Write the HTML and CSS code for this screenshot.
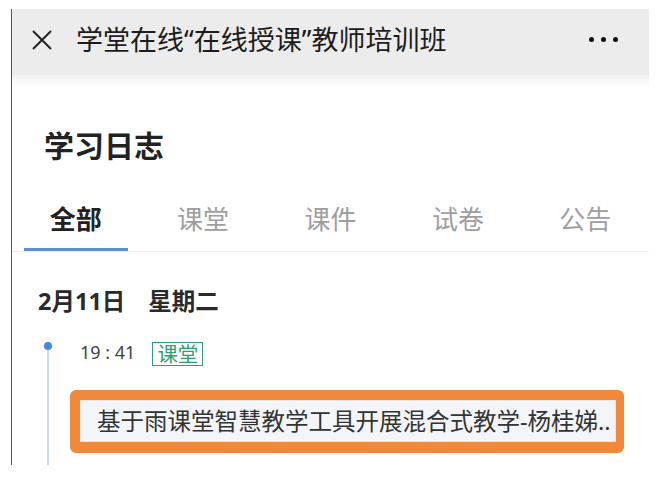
FILE: index.html
```html
<!DOCTYPE html>
<html lang="zh-CN">
<head>
  <meta charset="UTF-8">
  <meta name="viewport" content="width=device-width, initial-scale=1.0">
  <title>学习日志</title>
  <link rel="stylesheet" href="styles.css">
</head>
<body>
  <div class="frame">
    <header class="topbar">
      <svg class="close-icon" width="20" height="20" viewBox="0 0 20 20">
        <path d="M1 1 L19 19 M19 1 L1 19" stroke="#222" stroke-width="2" fill="none"/>
      </svg>
      <h1 class="page-title">学堂在线“在线授课”教师培训班</h1>
      <div class="more">
        <span></span><span></span><span></span>
      </div>
    </header>

    <main class="content">
      <h2 class="log-title">学习日志</h2>

      <nav class="tabs">
        <div class="tab active">全部</div>
        <div class="tab">课堂</div>
        <div class="tab">课件</div>
        <div class="tab">试卷</div>
        <div class="tab">公告</div>
      </nav>

      <div class="day">2月11日<span class="weekday">星期二</span></div>

      <div class="entry">
        <div class="rail">
          <div class="rail-dot"></div>
          <div class="rail-line"></div>
        </div>
        <div class="entry-body">
          <div class="entry-meta">
            <span class="time">19 : 41</span>
            <span class="tag">课堂</span>
          </div>
          <div class="highlight">
            <div class="item-card">基于雨课堂智慧教学工具开展混合式教学-杨桂娣..</div>
          </div>
        </div>
      </div>
    </main>
  </div>
</body>
</html>
```

FILE: styles.css
```css
body {
  margin: 0;
  padding: 9px 0 0 11px;
  background: #ffffff;
  font-family: "Noto Sans", "Noto Sans CJK SC", sans-serif;
  color: #222;
}
.frame {
  width: 637px;
  height: 456px;
  border-left: 1px solid #555;
  overflow: hidden;
}
.topbar {
  height: 66px;
  box-sizing: border-box;
  padding: 0 31px 5px 20px;
  display: flex;
  align-items: center;
  background-color: #ececec;
}
.close-icon {
  flex: none;
  margin-right: 24px;
}
.page-title {
  flex: 1;
  margin: 0;
  font-size: 27px;
  font-weight: normal;
  line-height: 36px;
  color: #1c1c1c;
  white-space: nowrap;
}
.more {
  display: flex;
  gap: 7px;
}
.more span {
  width: 5px;
  height: 5px;
  border-radius: 50%;
  background-color: #111;
}
.content {
  padding-top: 51px;
  background: linear-gradient(#f1f1f1, #ffffff 12px) no-repeat;
}
.log-title {
  margin: 0 0 35px 32px;
  font-size: 30px;
  line-height: 40px;
  font-weight: bold;
  color: #222;
}
.tabs {
  display: flex;
  border-bottom: 1px solid #eeeeee;
}
.tab {
  flex: 1;
  text-align: center;
  font-size: 26px;
  line-height: 36px;
  color: #9e9e9e;
}
.tab::after {
  content: "";
  display: block;
  width: 104px;
  height: 3px;
  margin: 11px auto 0;
}
.tab.active {
  color: #222;
  font-weight: bold;
}
.tab.active::after {
  background-color: #5b8dd0;
}
.day {
  margin: 33px 0 22px 26px;
  font-size: 23.5px;
  line-height: 32px;
  font-weight: bold;
  color: #2a2a2a;
}
.weekday {
  margin-left: 23px;
}
.entry {
  display: flex;
  padding-left: 31px;
}
.rail {
  width: 9px;
  display: flex;
  flex-direction: column;
  align-items: center;
  padding-top: 3px;
}
.rail-dot {
  width: 8px;
  height: 8px;
  border-radius: 50%;
  background-color: #4a86e0;
}
.rail-line {
  flex: 1;
  width: 2px;
  background-color: #c9d8ea;
}
.entry-body {
  flex: 1;
  margin: 0 25px 0 18px;
  padding-bottom: 12px;
}
.entry-meta {
  display: flex;
  align-items: center;
  padding-left: 10px;
  height: 26px;
}
.time {
  font-size: 18px;
  color: #444;
  margin-right: 17px;
}
.tag {
  margin-top: 4px;
  padding: 0 4px;
  border: 1.5px solid #2f9f72;
  font-size: 20.5px;
  line-height: 22px;
  color: #2f9f72;
}
.highlight {
  margin-top: 25px;
  border: 10px solid #ef8a3c;
  border-width: 10px 8px 11px 10px;
  border-radius: 6px;
}
.item-card {
  height: 42px;
  box-sizing: border-box;
  padding: 0 0 0 16px;
  background-color: #f3f5f9;
  border: 1px solid #e3e6eb;
  font-size: 23.5px;
  line-height: 40px;
  color: #333;
  white-space: nowrap;
  overflow: hidden;
}
```
